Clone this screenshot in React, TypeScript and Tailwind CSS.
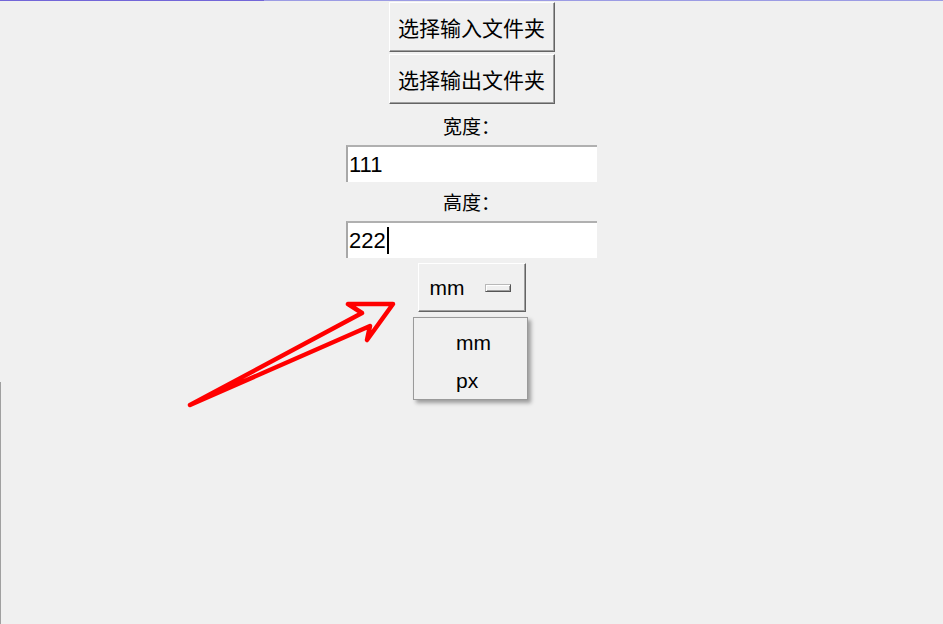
import React from "react";

const cjk = { fontFamily: '"Noto Sans CJK SC", "Noto Sans", sans-serif' };
const latin = { fontFamily: '"Liberation Sans", Arial, sans-serif' };

function RaisedButton({ children }: { children: React.ReactNode }) {
  return (
    <div
      className="w-[166px] h-[50px] flex items-center justify-center bg-[#f0f0f0] border border-t-white border-l-white border-b-[#646464] border-r-[#646464] shadow-[inset_-1px_-1px_0_#a0a0a0] text-[21px] text-black leading-none"
      style={cjk}
    >
      {children}
    </div>
  );
}

function Entry({ value, cursor }: { value: string; cursor?: boolean }) {
  return (
    <div className="w-[251px] h-[37px] bg-white border-t-2 border-l-2 border-t-[#b0b0b0] border-l-[#a8a8a8] flex items-center pl-[1px]">
      <span className="text-[22px] text-black leading-none" style={latin}>
        {value}
      </span>
      {cursor && <span className="inline-block w-[2px] h-[27px] bg-black ml-[1px]" />}
    </div>
  );
}

export default function App() {
  return (
    <div className="relative w-[943px] h-[624px] bg-[#f0f0f0] overflow-hidden">
      <div className="flex h-px">
        <div className="w-[264px] bg-[#7366d8]" />
        <div className="flex-1 bg-[#9c9ce4]" />
      </div>
      <div className="flex flex-col items-center">
        <div className="mt-[1px]">
          <RaisedButton>选择输入文件夹</RaisedButton>
        </div>
        <div className="mt-[2px]">
          <RaisedButton>选择输出文件夹</RaisedButton>
        </div>
        <div className="h-[41px] flex items-center justify-center pt-[3px] text-[19px] text-black" style={cjk}>
          宽度：
        </div>
        <Entry value="111" />
        <div className="h-[39px] flex items-center justify-center pt-[2px] text-[19px] text-black" style={cjk}>
          高度：
        </div>
        <Entry value="222" cursor />
        <div className="mt-[5px] w-[108px] h-[49px] flex items-center bg-[#f0f0f0] border border-t-white border-l-white border-b-[#646464] border-r-[#646464] shadow-[inset_-1px_-1px_0_#a0a0a0] pl-[11px]">
          <span className="text-[21px] text-black leading-none" style={latin}>
            mm
          </span>
          <span className="ml-[20px] w-[26px] h-[8px] bg-[#f0f0f0] border border-t-[#b8b8b8] border-l-[#b8b8b8] border-b-[#555] border-r-[#555] shadow-[inset_1px_1px_0_#ffffff,inset_-1px_-1px_0_#a0a0a0]" />
        </div>
      </div>

      <div className="absolute left-0 top-[382px] bottom-0 w-px bg-[#a0a0a0]" />

      <div className="absolute left-[413px] top-[317px] w-[115px] h-[83px] bg-[#f0f0f0] border border-[#9a9a9a] shadow-[3px_3px_4px_rgba(0,0,0,0.35)] pt-[5px]">
        <div className="h-[38px] flex items-center pl-[42px] text-[21px] text-black leading-none" style={latin}>
          mm
        </div>
        <div className="h-[38px] flex items-center pl-[42px] text-[21px] text-black leading-none" style={latin}>
          px
        </div>
      </div>

      <svg className="absolute left-0 top-0 pointer-events-none" width="943" height="624">
        <polygon
          points="190,405 362,313 348,304 393,304 367,340 370,326 190,405"
          fill="none"
          stroke="#ff0000"
          strokeWidth="4.5"
          strokeLinejoin="round"
          strokeLinecap="round"
        />
      </svg>
    </div>
  );
}
